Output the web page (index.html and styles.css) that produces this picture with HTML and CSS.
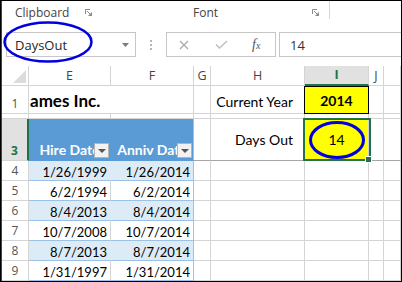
FILE: index.html
```html
<!DOCTYPE html>
<html lang="en">
<head>
  <meta charset="UTF-8">
  <title>DaysOut</title>
  <link rel="stylesheet" href="styles.css">
</head>
<body>
  <div class="window">
    <div class="app">
      <div class="ribbon">
        <div class="group g-clip">
          <span>Clipboard</span>
          <svg class="launcher" width="7" height="7" viewBox="0 0 7 7"><path d="M0.5 5V0.5H5" fill="none" stroke="#8a8a8a"/><path d="M2 2l3.5 3.5" stroke="#8a8a8a"/><path d="M3 7H7V3z" fill="#8a8a8a"/></svg>
        </div>
        <div class="group g-font">
          <span>Font</span>
          <svg class="launcher" width="7" height="7" viewBox="0 0 7 7"><path d="M0.5 5V0.5H5" fill="none" stroke="#8a8a8a"/><path d="M2 2l3.5 3.5" stroke="#8a8a8a"/><path d="M3 7H7V3z" fill="#8a8a8a"/></svg>
        </div>
        <div class="sep"></div>
      </div>

      <div class="formula-bar">
        <div class="namebox">
          <span>DaysOut</span>
          <svg width="7" height="4" viewBox="0 0 7 4"><path d="M0 0H7L3.5 4z" fill="#7a7a7a"/></svg>
        </div>
        <div class="dots"><i></i><i></i><i></i></div>
        <div class="fx-box">
          <svg width="10" height="10" viewBox="0 0 10 10"><path d="M1 1l8 8M9 1l-8 8" stroke="#a9a9a9" stroke-width="1.2"/></svg>
          <svg class="ok" width="13" height="9" viewBox="0 0 13 9"><path d="M1 4.5l3.5 3.5L12 1" fill="none" stroke="#c2c2c2" stroke-width="1.6"/></svg>
          <span class="fx"><i>f</i><small>x</small></span>
        </div>
        <div class="formula-input">14</div>
      </div>

      <div class="sheet">
        <!-- column headers -->
        <div class="hd corner"><span class="tri"></span></div>
        <div class="hd">E</div>
        <div class="hd">F</div>
        <div class="hd">G</div>
        <div class="hd">H</div>
        <div class="hd sel-col">I</div>
        <div class="hd">J</div>
        <div class="hd"></div>

        <!-- row 1 -->
        <div class="rh">1</div>
        <div class="title">ames Inc.</div>
        <div></div>
        <div class="label">Current Year</div>
        <div class="year">2014</div>
        <div></div>
        <div></div>

        <!-- row 2 (hidden) -->
        <div class="rh"></div>
        <div></div><div></div><div></div><div></div><div></div><div></div><div></div>

        <!-- row 3 -->
        <div class="rh sel-row">3</div>
        <div class="th">Hire Date<span class="filter"></span></div>
        <div class="th th-last">Anniv Date<span class="filter"></span></div>
        <div class="r3"></div>
        <div class="r3 label mid">Days Out</div>
        <div class="r3 days">14</div>
        <div class="r3"></div>
        <div class="r3"></div>

        <!-- rows 4-9 -->
        <div class="rh">4</div>
        <div class="d band">1/26/1999</div><div class="d band d-last">1/26/2014</div>
        <div></div><div></div><div></div><div></div><div></div>

        <div class="rh">5</div>
        <div class="d">6/2/1994</div><div class="d d-last">6/2/2014</div>
        <div></div><div></div><div></div><div></div><div></div>

        <div class="rh">6</div>
        <div class="d band">8/4/2013</div><div class="d band d-last">8/4/2014</div>
        <div></div><div></div><div></div><div></div><div></div>

        <div class="rh">7</div>
        <div class="d">10/7/2008</div><div class="d d-last">10/7/2014</div>
        <div></div><div></div><div></div><div></div><div></div>

        <div class="rh">8</div>
        <div class="d band">8/7/2013</div><div class="d band d-last">8/7/2014</div>
        <div></div><div></div><div></div><div></div><div></div>

        <div class="rh">9</div>
        <div class="d">1/31/1997</div><div class="d d-last">1/31/2014</div>
        <div></div><div></div><div></div><div></div><div></div>
      </div>
    </div>

    <!-- selection and markup drawn over the sheet -->
    <div class="active-cell"></div>
    <div class="fill-handle"></div>
    <svg class="ring ring-name" width="90" height="42" viewBox="0 0 90 42"><ellipse cx="45" cy="21" rx="43.5" ry="19.5" fill="none" stroke="#0000e0" stroke-width="2.5"/></svg>
    <svg class="ring ring-cell" width="56" height="38" viewBox="0 0 56 38"><ellipse cx="28" cy="19" rx="26.5" ry="17.5" fill="none" stroke="#0000e0" stroke-width="3"/></svg>
  </div>
</body>
</html>
```

FILE: styles.css
```css
* {
  box-sizing: border-box;
}

body {
  margin: 0;
  background-color: #fff;
}

.window {
  position: relative;
  width: 402px;
  height: 282px;
  border: 1px solid #000;
  overflow: hidden;
  background-color: #fff;
  font-family: "Open Sans", "Noto Sans", sans-serif;
}

.app {
  height: 100%;
  border-left: 1px solid #1d5c3a;
}

/* ribbon group labels */
.ribbon {
  display: flex;
  align-items: center;
  height: 22px;
  font-size: 12px;
  color: #444;
}

.group {
  display: flex;
  align-items: center;
  justify-content: space-between;
}

.g-clip {
  width: 90px;
  padding-left: 13px;
}

.g-font {
  width: 227px;
  padding-left: 101px;
}

.launcher {
  display: block;
}

.sep {
  align-self: flex-start;
  width: 1px;
  height: 18px;
  margin-left: 10px;
  background-color: #d6d6d6;
}

/* name box + formula bar */
.formula-bar {
  display: flex;
  align-items: flex-start;
  height: 43px;
  padding-top: 9px;
}

.namebox {
  display: flex;
  align-items: center;
  justify-content: space-between;
  width: 130px;
  height: 25px;
  margin-left: 4px;
  padding: 0 6px 0 8px;
  border: 1px solid #c6c6c6;
  font-size: 13px;
  color: #262626;
}

.dots {
  display: flex;
  flex-direction: column;
  align-items: center;
  justify-content: center;
  gap: 2px;
  width: 30px;
  height: 25px;
}

.dots i {
  width: 2px;
  height: 2px;
  background-color: #b5b5b5;
}

.fx-box {
  display: flex;
  align-items: center;
  width: 110px;
  height: 25px;
  padding-left: 12px;
  border: 1px solid #c6c6c6;
}

.fx-box .ok {
  margin-left: 26px;
}

.fx {
  margin-left: 24px;
  font-family: "Liberation Serif", serif;
  font-style: italic;
  font-size: 14px;
  color: #555;
}

.fx small {
  font-size: 10px;
}

.formula-input {
  display: flex;
  align-items: center;
  flex: 1;
  height: 25px;
  margin-left: 3px;
  margin-right: -10px;
  padding-left: 10px;
  border: 1px solid #c6c6c6;
  font-size: 13px;
  color: #333;
}

/* worksheet */
.sheet {
  display: grid;
  grid-template-columns: 27px 82px 83px 17px 94px 64px 15px 1fr;
  grid-template-rows: 20px 28px 5px 42px repeat(6, 20px);
  font-family: Lato, "Liberation Sans", sans-serif;
  font-size: 14px;
  line-height: 16px;
  color: #000;
}

.sheet > div {
  display: flex;
  min-width: 0;
  overflow: hidden;
  white-space: nowrap;
  border-right: 1px solid #d4d4d4;
  border-bottom: 1px solid #d4d4d4;
}

.hd {
  align-items: center;
  justify-content: center;
  font-family: "Open Sans", sans-serif;
  font-size: 12.5px;
  color: #444;
}

.corner {
  align-items: flex-end;
  justify-content: flex-end;
  padding: 0 2px 2px 0;
}

.tri {
  width: 0;
  height: 0;
  border-left: 13px solid transparent;
  border-bottom: 13px solid #dcdcdc;
}

.sel-col {
  background-color: #e1e1e1;
  color: #217346;
  font-weight: 700;
  border-bottom: 2px solid #217346 !important;
}

.rh {
  align-items: flex-end;
  justify-content: center;
  padding-bottom: 1px;
  font-family: "Open Sans", sans-serif;
  font-size: 12px;
  color: #555;
}

.sel-row {
  background-color: #e1e1e1;
  color: #217346;
  font-weight: 700;
  border-right: 2px solid #217346 !important;
}

.title {
  grid-column: span 2;
  align-items: flex-end;
  padding: 0 0 2px 1px;
  font-size: 17px;
  font-weight: 700;
  line-height: 20px;
}

.label {
  align-items: flex-end;
  justify-content: flex-end;
  padding: 0 11px 3px 0;
}

.label.mid {
  align-items: center;
  padding-bottom: 0;
}

.year {
  align-items: flex-end;
  justify-content: center;
  padding-bottom: 4px;
  background-color: #ffff00;
  font-weight: 700;
  border-right-color: #000 !important;
  border-bottom-color: #000 !important;
  box-shadow: -1px 0 0 #000, inset 0 1px 0 #000;
}

.days {
  align-items: center;
  justify-content: center;
  background-color: #ffff00;
}

.r3 {
  border-bottom-color: #a6a6a6 !important;
}

/* table */
.th {
  position: relative;
  align-items: flex-end;
  justify-content: center;
  padding-bottom: 2px;
  background-color: #5b9bd5;
  color: #fff;
  font-weight: 700;
  border-right-color: #5b9bd5 !important;
  border-bottom-color: #5b9bd5 !important;
}

.th-last {
  border-right-color: #9bc2e6 !important;
}

.filter {
  position: absolute;
  right: 1px;
  bottom: 2px;
  display: flex;
  align-items: center;
  justify-content: center;
  width: 15px;
  height: 15px;
  background-color: #f2f2f2;
  border: 1px solid #b4b4b4;
}

.filter::after {
  content: "";
  border-left: 4px solid transparent;
  border-right: 4px solid transparent;
  border-top: 4px solid #555;
}

.d {
  align-items: flex-end;
  justify-content: flex-end;
  padding-right: 3px;
  font-size: 13px;
  border-bottom-color: #9bc2e6 !important;
}

.band {
  background-color: #ddebf7;
  border-right-color: #ddebf7 !important;
}

.d-last {
  border-right-color: #9bc2e6 !important;
}

/* overlays */
.active-cell {
  position: absolute;
  left: 302px;
  top: 117px;
  width: 68px;
  height: 43px;
  border: 2px solid #217346;
}

.fill-handle {
  position: absolute;
  left: 364px;
  top: 155px;
  width: 7px;
  height: 7px;
  background-color: #217346;
  border: 1px solid #fff;
}

.ring {
  position: absolute;
}

.ring-name {
  left: 2px;
  top: 20px;
}

.ring-cell {
  left: 308px;
  top: 120px;
}
```
